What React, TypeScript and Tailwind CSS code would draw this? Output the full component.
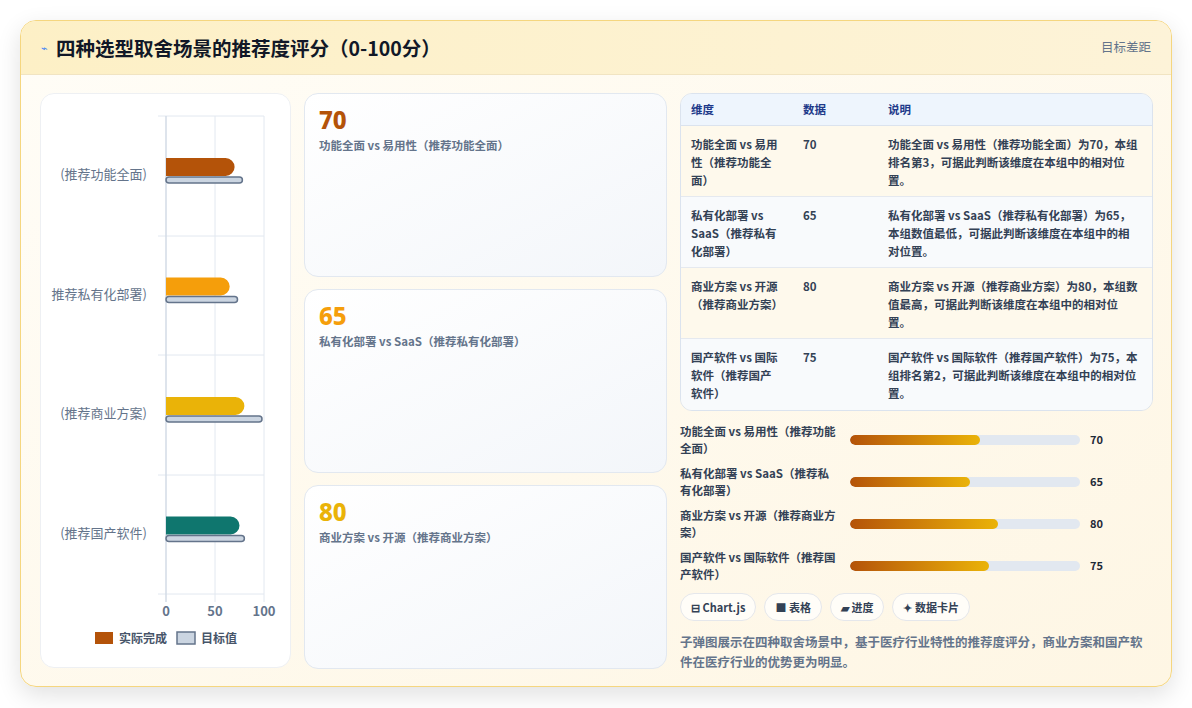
import React from "react";

const F = { fontFamily: '"Noto Sans CJK SC", "Noto Sans", sans-serif' };

const rows = [
  { d: "功能全面 vs 易用性（推荐功能全面）", v: 70, t: 80, c: "#b45309", short: "(推荐功能全面)", note: "功能全面 vs 易用性（推荐功能全面）为70，本组排名第3，可据此判断该维度在本组中的相对位置。", bg: "bg-[#fef9ec]" },
  { d: "私有化部署 vs SaaS（推荐私有化部署）", v: 65, t: 75, c: "#f59e0b", short: "推荐私有化部署)", note: "私有化部署 vs SaaS（推荐私有化部署）为65，本组数值最低，可据此判断该维度在本组中的相对位置。", bg: "bg-[#f8fafc]" },
  { d: "商业方案 vs 开源（推荐商业方案）", v: 80, t: 100, c: "#eab308", short: "(推荐商业方案)", note: "商业方案 vs 开源（推荐商业方案）为80，本组数值最高，可据此判断该维度在本组中的相对位置。", bg: "bg-[#fef9ec]" },
  { d: "国产软件 vs 国际软件（推荐国产软件）", v: 75, t: 82, c: "#0f766e", short: "(推荐国产软件)", note: "国产软件 vs 国际软件（推荐国产软件）为75，本组排名第2，可据此判断该维度在本组中的相对位置。", bg: "bg-[#f8fafc]" },
];

function Chart() {
  const x0 = 125, s = 0.98;
  return (
    <svg width="250" height="574" viewBox="0 0 250 574" style={F}>
      {[0, 50, 100].map((g) => (
        <line key={g} x1={x0 + g * s} x2={x0 + g * s} y1={22} y2={508} stroke="#e2e8f0" />
      ))}
      {[22, 142, 261, 381, 500].map((y) => (
        <line key={y} x1={117} x2={x0 + 98} y1={y} y2={y} stroke="#e2e8f0" />
      ))}
      <line x1={x0} x2={x0} y1={22} y2={508} stroke="#cbd5e1" />
      {rows.map((r, i) => {
        const cy = 80 + i * 119.5;
        return (
          <g key={i}>
            <text x={106} y={cy + 5} textAnchor="end" fontSize="13" fill="#64748b">{r.short}</text>
            <path d={`M${x0} ${cy - 16} H${x0 + r.v * s - 9} a9 9 0 0 1 9 9 v0 a9 9 0 0 1 -9 9 H${x0} Z`} fill={r.c} />
            <rect x={x0} y={cy + 3} width={r.t * s - 2} height={6} rx={3} fill="#cbd5e1" stroke="#64748b" strokeWidth="1.5" />
          </g>
        );
      })}
      {[0, 50, 100].map((g) => (
        <text key={g} x={x0 + g * s} y={522} textAnchor="middle" fontSize="13" fill="#64748b" fontWeight="600">{g}</text>
      ))}
      <rect x={54} y={538} width={18} height={12} fill="#b45309" />
      <text x={78} y={549} fontSize="12" fill="#475569" fontWeight="600">实际完成</text>
      <rect x={136} y={538} width={18} height={12} fill="#cbd5e1" stroke="#64748b" strokeWidth="1.5" />
      <text x={160} y={549} fontSize="12" fill="#475569" fontWeight="600">目标值</text>
    </svg>
  );
}

export default function App() {
  const cards = [
    { v: 70, c: "text-[#b45309]", l: "功能全面 vs 易用性（推荐功能全面）" },
    { v: 65, c: "text-[#f59e0b]", l: "私有化部署 vs SaaS（推荐私有化部署）" },
    { v: 80, c: "text-[#eab308]", l: "商业方案 vs 开源（推荐商业方案）" },
  ];
  return (
    <div className="w-[1192px] h-[708px] bg-white pt-[20px] pl-[20px]" style={F}>
      <div className="w-[1152px] h-[667px] rounded-[16px] border border-[#f5d67f] overflow-hidden bg-gradient-to-br from-[#fffdf7] to-[#fef6e4] shadow-[0_8px_24px_rgba(0,0,0,0.12)] flex flex-col">
        <div className="h-[54px] bg-gradient-to-r from-[#fdf0c6] to-[#fdf3d8] border-b border-[#f1e4c2] flex items-center justify-between pl-[20px] pr-[20px] shrink-0">
          <div className="flex items-center gap-[8px]">
            <span className="text-[#3b82f6] text-[11px]">⌁</span>
            <span className="text-[19.5px] font-bold text-[#111827]">四种选型取舍场景的推荐度评分（0-100分）</span>
          </div>
          <span className="text-[12.5px] text-[#64748b]">目标差距</span>
        </div>
        <div className="flex gap-[13px] pl-[19px] pr-[18px] pt-[18px]">
          <div className="w-[251px] h-[575px] bg-white rounded-[14px] border border-[#eef0f3] overflow-hidden shrink-0">
            <Chart />
          </div>
          <div className="w-[363px] flex flex-col gap-[12px] shrink-0">
            {cards.map((c) => (
              <div key={c.v} className="h-[184px] rounded-[14px] border border-[#e2e8f0] bg-gradient-to-br from-[#ffffff] to-[#f3f6fa] px-[14px] pt-[10px]">
                <div className={`text-[24px] font-extrabold leading-[32px] ${c.c}`} style={{ fontFamily: '"Noto Sans", sans-serif' }}>{c.v}</div>
                <div className="text-[11.5px] font-semibold text-[#64748b] mt-[1px]">{c.l}</div>
              </div>
            ))}
          </div>
          <div className="flex-1 flex flex-col">
            <div className="rounded-[12px] border border-[#dbe3ee] overflow-hidden">
              <div className="flex h-[32px] items-center bg-[#eef5fd] border-b border-[#dbe3ee] text-[11.5px] font-bold text-[#1e3a8a]">
                <div className="w-[122px] pl-[10px]">维度</div>
                <div className="w-[85px]">数据</div>
                <div className="flex-1">说明</div>
              </div>
              {rows.map((r, i) => (
                <div key={i} className={`flex h-[71px] pt-[9px] text-[11.5px] leading-[18px] font-semibold text-[#334155] ${r.bg} ${i < 3 ? "border-b border-[#e5e9ef]" : ""}`}>
                  <div className="w-[122px] pl-[10px] pr-[24px]">{r.d}</div>
                  <div className="w-[85px]">{r.v}</div>
                  <div className="flex-1 pr-[12px]">{r.note}</div>
                </div>
              ))}
            </div>
            <div className="flex flex-col gap-[5px] mt-[10px]">
              {rows.map((r, i) => (
                <div key={i} className="flex items-center h-[37px]">
                  <div className="w-[170px] pr-[12px] text-[11.5px] leading-[17px] font-semibold text-[#334155]">{r.d}</div>
                  <div className="w-[230px] h-[10px] bg-[#e2e8f0] rounded-full overflow-hidden">
                    <div className="h-full rounded-full bg-gradient-to-r from-[#b45309] to-[#eab308]" style={{ width: `${Math.round(r.v * 1.85)}px` }} />
                  </div>
                  <div className="ml-[10px] text-[11px] font-bold text-[#1f2937]">{r.v}</div>
                </div>
              ))}
            </div>
            <div className="flex gap-[8px] mt-[9px]">
              {["⊟ Chart.js", "■ 表格", "▰ 进度", "✦ 数据卡片"].map((t) => (
                <span key={t} className="h-[28px] px-[10px] rounded-full border border-[#e5e7eb] bg-[#fffdf8] text-[11px] font-semibold text-[#334155] flex items-center">{t}</span>
              ))}
            </div>
            <div className="mt-[11px] text-[12.5px] leading-[20px] text-[#64748b] font-semibold">子弹图展示在四种取舍场景中，基于医疗行业特性的推荐度评分，商业方案和国产软件在医疗行业的优势更为明显。</div>
          </div>
        </div>
      </div>
    </div>
  );
}
